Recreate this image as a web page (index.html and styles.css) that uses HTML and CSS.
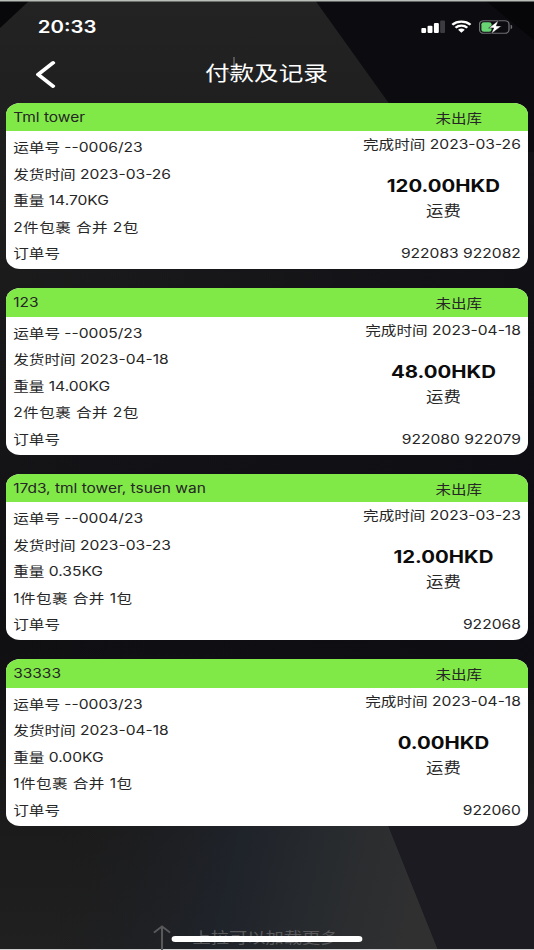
FILE: index.html
```html
<!DOCTYPE html>
<html lang="zh-CN">
<head>
  <meta charset="UTF-8" />
  <meta name="viewport" content="width=device-width, initial-scale=1.0" />
  <title>付款及记录</title>
  <link rel="stylesheet" href="styles.css">
</head>
<body>
  <svg class="backdrop" viewBox="0 0 534 950" preserveAspectRatio="none">
    <defs>
      <linearGradient id="base" x1="0" y1="0" x2="0" y2="1">
        <stop offset="0" stop-color="#232323" />
        <stop offset="0.12" stop-color="#1f1f20" />
        <stop offset="0.3" stop-color="#1b1b1c" />
        <stop offset="0.49" stop-color="#141417" />
        <stop offset="0.68" stop-color="#101013" />
        <stop offset="0.87" stop-color="#1b1b1b" />
        <stop offset="1" stop-color="#202020" />
      </linearGradient>
      <linearGradient id="shade" x1="0" y1="0" x2="1" y2="0">
        <stop offset="0" stop-color="#0c0b12" stop-opacity="0" />
        <stop offset="1" stop-color="#0c0b12" stop-opacity="0.7" />
      </linearGradient>
      <linearGradient id="facet" x1="0" y1="0" x2="1" y2="0.1">
        <stop offset="0" stop-color="#1c1c1e" stop-opacity="0" />
        <stop offset="0.5" stop-color="#1f232a" />
        <stop offset="0.75" stop-color="#282b2e" />
        <stop offset="1" stop-color="#303031" />
      </linearGradient>
    </defs>
    <rect width="534" height="950" fill="url(#base)" />
    <rect y="110" width="534" height="590" fill="url(#shade)" />
    <path d="M0 0H30L0 28z" fill="#08080a" />
    <path d="M315 0H534V152H425L388 102z" fill="#0b0b10" />
    <path d="M485 0H534V40z" fill="#060608" />
    <path d="M60 800H378L438 950H60z" fill="url(#facet)" />
    <path d="M378 800H534V950H438z" fill="#1b1b21" />
    <path d="M0 0.75H534" stroke="#b9beb9" stroke-width="1.5" />
    <path d="M0 949.5H534" stroke="#d0d0d0" />
  </svg>

  <div class="screen">
    <div class="status-bar">
      <span class="clock">20:33</span>
      <div class="status-icons">
        <svg class="signal" viewBox="0 0 20 13">
          <rect x="0" y="8" width="4.1" height="5" rx="1" />
          <rect x="5.3" y="5.8" width="4.1" height="7.2" rx="1" />
          <rect x="10.6" y="3" width="4.1" height="10" rx="1" />
          <rect class="dim" x="15.8" y="0.5" width="4.1" height="12.5" rx="1" />
        </svg>
        <svg class="wifi" viewBox="0 0 17 13">
          <path d="M0.9 4.7A10.8 10.8 0 0 1 16.1 4.7" />
          <path d="M3.6 7.7A7 7 0 0 1 13.4 7.7" />
          <path class="dot" d="M5.7 9.8A4 4 0 0 1 11.3 9.8L8.5 12.8z" />
        </svg>
        <svg class="battery" viewBox="0 0 29 14">
          <rect class="shell" x="0.6" y="0.6" width="25" height="12.8" rx="3.6" />
          <path class="tip" d="M27 4.8Q28.6 5.4 28.6 7T27 9.2z" />
          <rect class="level" x="2.2" y="2.2" width="8.6" height="9.6" rx="2" />
          <path class="bolt" d="M16.8 0.2L8.4 8H12.7L10.4 14L19.3 5.9H14.8z" />
        </svg>
      </div>
    </div>

    <div class="nav-bar">
      <svg class="back" viewBox="0 0 16 26"><path d="M14 1.8L2 13L14 24.2" /></svg>
      <svg class="pull-arrow" viewBox="0 0 14 22"><path d="M7 1V20M1 15L7 20L13 15" /></svg>
      <h1 class="page-title">付款及记录</h1>
    </div>

    <div class="records">
      <div class="record">
        <div class="record-header">
          <span>Tml tower</span>
          <span class="state">未出库</span>
        </div>
        <div class="record-body">
          <div class="details">
            <p>运单号 --0006/23</p>
            <p>发货时间 2023-03-26</p>
            <p>重量 14.70KG</p>
            <p class="parcels">2件包裹 合并 2包</p>
            <p>订单号</p>
          </div>
          <div class="summary">
            <p class="finished">完成时间 2023-03-26</p>
            <div class="cost">
              <strong>120.00HKD</strong>
              <span>运费</span>
            </div>
            <p class="orders">922083 922082</p>
          </div>
        </div>
      </div>

      <div class="record">
        <div class="record-header">
          <span>123</span>
          <span class="state">未出库</span>
        </div>
        <div class="record-body">
          <div class="details">
            <p>运单号 --0005/23</p>
            <p>发货时间 2023-04-18</p>
            <p>重量 14.00KG</p>
            <p class="parcels">2件包裹 合并 2包</p>
            <p>订单号</p>
          </div>
          <div class="summary">
            <p class="finished">完成时间 2023-04-18</p>
            <div class="cost">
              <strong>48.00HKD</strong>
              <span>运费</span>
            </div>
            <p class="orders">922080 922079</p>
          </div>
        </div>
      </div>

      <div class="record">
        <div class="record-header">
          <span>17d3, tml tower, tsuen wan</span>
          <span class="state">未出库</span>
        </div>
        <div class="record-body">
          <div class="details">
            <p>运单号 --0004/23</p>
            <p>发货时间 2023-03-23</p>
            <p>重量 0.35KG</p>
            <p class="parcels">1件包裹 合并 1包</p>
            <p>订单号</p>
          </div>
          <div class="summary">
            <p class="finished">完成时间 2023-03-23</p>
            <div class="cost">
              <strong>12.00HKD</strong>
              <span>运费</span>
            </div>
            <p class="orders">922068</p>
          </div>
        </div>
      </div>

      <div class="record">
        <div class="record-header">
          <span>33333</span>
          <span class="state">未出库</span>
        </div>
        <div class="record-body">
          <div class="details">
            <p>运单号 --0003/23</p>
            <p>发货时间 2023-04-18</p>
            <p>重量 0.00KG</p>
            <p class="parcels">1件包裹 合并 1包</p>
            <p>订单号</p>
          </div>
          <div class="summary">
            <p class="finished">完成时间 2023-04-18</p>
            <div class="cost">
              <strong>0.00HKD</strong>
              <span>运费</span>
            </div>
            <p class="orders">922060</p>
          </div>
        </div>
      </div>
    </div>

    <div class="load-more">
      <svg viewBox="0 0 16 26"><path d="M8 26V1.5M1 8L8 1.5L15 8" /></svg>
      <span>上拉可以加载更多</span>
    </div>
    <div class="home-indicator"></div>
  </div>
</body>
</html>
```
FILE: styles.css
```css
:root {
  --green: #80e948;
  --ink: #262626;
  --muted: #59595b;
  font-family: Inter, "Noto Sans CJK SC", sans-serif;
}

* {
  box-sizing: border-box;
}

body {
  margin: 0;
  height: 950px;
  overflow: hidden;
  background-color: #1b1b1c;
  color: var(--ink);
}

h1,
p {
  margin: 0;
}

.backdrop {
  position: absolute;
  top: 0;
  left: 0;
  width: 534px;
  height: 950px;
}

.screen {
  position: relative;
  display: flex;
  flex-direction: column;
  width: 445px;
  height: 950px;
  transform: scaleX(1.2);
  transform-origin: 0 0;
  font-size: 13px;
}

.status-bar {
  display: flex;
  justify-content: space-between;
  align-items: center;
  height: 53px;
  padding: 0 18px 0 31.5px;
  color: #fff;
}

.clock {
  font-size: 17px;
  font-weight: 600;
}

.status-icons {
  display: flex;
  align-items: center;
  gap: 5.5px;
  fill: #fff;
}

.signal {
  width: 20px;
  height: 13px;
}

.signal .dim {
  fill: #3c3c40;
}

.wifi {
  width: 17px;
  height: 13px;
  fill: none;
  stroke: #fff;
  stroke-width: 2.2;
}

.wifi .dot {
  fill: #fff;
  stroke: none;
}

.battery {
  width: 28.5px;
  height: 14px;
}

.battery .shell {
  fill: none;
  stroke: #6f6f72;
  stroke-width: 1.1;
}

.battery .tip {
  fill: #6f6f72;
}

.battery .level {
  fill: #68d474;
}

.battery .bolt {
  stroke: #0b0b10;
  stroke-width: 0.5;
}

.nav-bar {
  position: relative;
  display: flex;
  justify-content: center;
  align-items: center;
  height: 41px;
  color: #fff;
}

.back {
  position: absolute;
  top: 7.5px;
  left: 28.5px;
  width: 18px;
  height: 27px;
  fill: none;
  stroke: #fff;
  stroke-width: 3.3;
  stroke-linecap: round;
  stroke-linejoin: round;
}

.pull-arrow {
  position: absolute;
  top: 3px;
  left: 188px;
  width: 14px;
  height: 22px;
  fill: none;
  stroke: #606062;
  stroke-width: 1.4;
}

.page-title {
  position: relative;
  left: -0.5px;
  font-size: 20.5px;
  font-weight: 400;
  line-height: 41px;
}

.records {
  display: flex;
  flex-direction: column;
  gap: 19px;
  padding: 8.5px 5.4px 0;
}

.record {
  height: 166.5px;
  border-radius: 12px;
  background-color: #fff;
  overflow: hidden;
}

.record-header {
  display: flex;
  justify-content: space-between;
  align-items: center;
  height: 28.5px;
  padding: 0.5px 38px 0 5.6px;
  background-color: var(--green);
  font-size: 12.9px;
}

.record-body {
  display: flex;
  justify-content: space-between;
  padding: 3.3px 5.6px 0;
}

.details p {
  line-height: 26.5px;
}

.details .parcels {
  letter-spacing: 0.35px;
}

.summary {
  display: flex;
  flex-direction: column;
  align-items: flex-end;
}

.finished {
  line-height: 20px;
}

.cost {
  display: flex;
  flex-direction: column;
  align-items: center;
  width: 129px;
  padding-top: 18px;
  height: 86px;
}

.cost strong {
  font-size: 17px;
  font-weight: 700;
  line-height: 28px;
  color: #0c0c0c;
}

.cost span {
  font-size: 14.5px;
  line-height: 22px;
}

.orders {
  line-height: 26.5px;
}

.load-more {
  display: flex;
  align-items: flex-start;
  gap: 18px;
  margin-top: auto;
  padding-left: 126.5px;
  height: 25px;
  color: var(--muted);
  font-size: 15.2px;
  line-height: 25px;
}

.load-more svg {
  width: 16px;
  height: 25px;
  fill: none;
  stroke: var(--muted);
  stroke-width: 1.8;
}

.home-indicator {
  position: absolute;
  bottom: 8.5px;
  left: 143px;
  width: 159px;
  height: 5.5px;
  border-radius: 3px;
  background-color: #fff;
}
```
